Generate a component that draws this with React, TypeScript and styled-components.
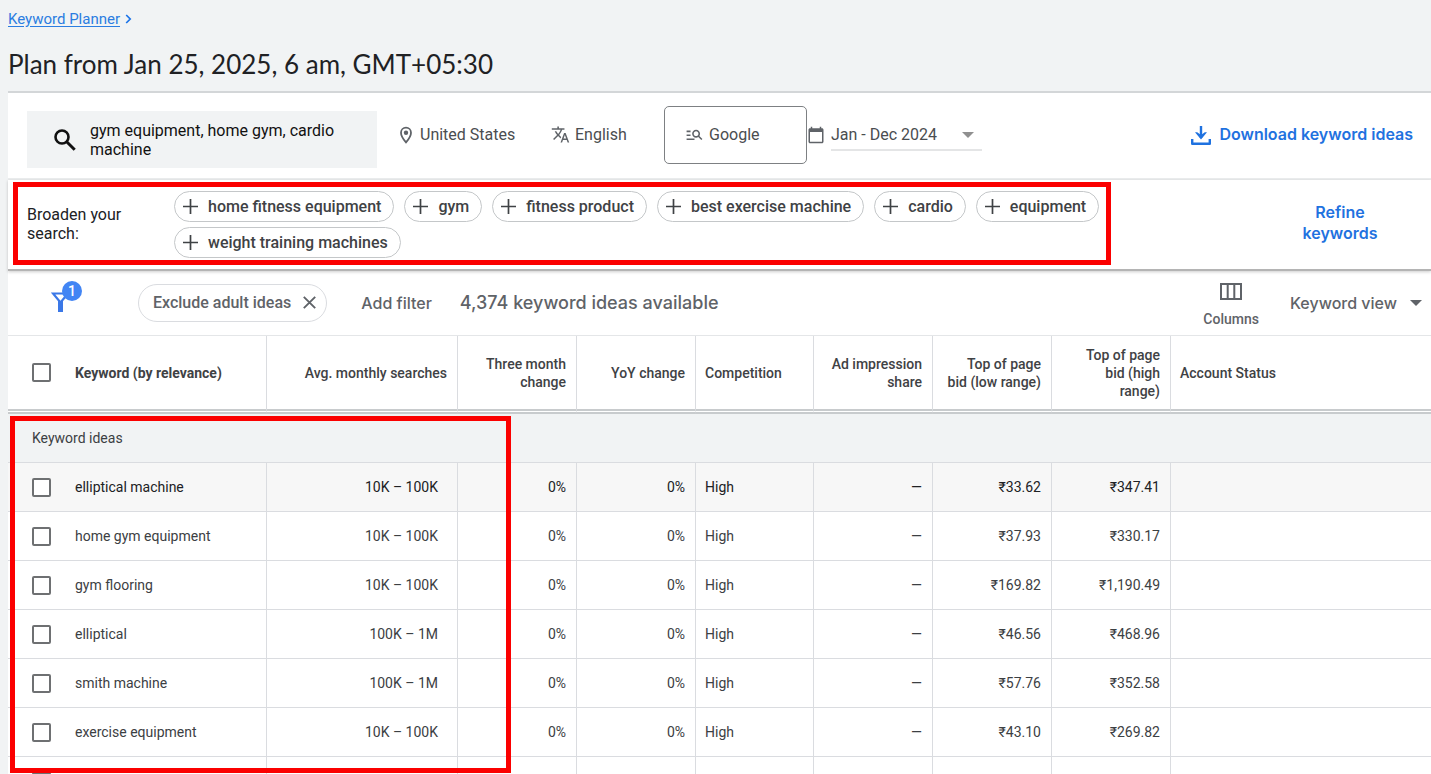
import React from "react";
import styled, { createGlobalStyle, css } from "styled-components";
import { MdTranslate, MdManageSearch, MdCalendarToday } from "react-icons/md";

const GlobalStyle = createGlobalStyle`
  *, *::before, *::after { box-sizing: border-box; }
  body {
    margin: 0;
    background: #f1f3f4;
    font-family: Roboto, "Liberation Sans", sans-serif;
    font-size: 14px;
    color: #3c4043;
  }
  button, select { font: inherit; color: inherit; background: none; border: 0; padding: 0; cursor: pointer; }
`;

const display = `Inter, Roboto, sans-serif`;

const Page = styled.div`
  height: 100vh;
  overflow: hidden;
  padding-left: 8px;
`;

const Breadcrumb = styled.nav`
  display: flex;
  align-items: center;
  gap: 5px;
  height: 38px;
`;

const CrumbLink = styled.a`
  color: #2b7de1;
  font-size: 15px;
  text-decoration: underline;
  text-underline-offset: 2px;
`;

const Title = styled.h1`
  margin: 0;
  height: 53px;
  line-height: 52px;
  font-family: Lato, Roboto, sans-serif;
  font-size: 26px;
  font-weight: 400;
  color: #202124;
  white-space: nowrap;
`;

const Panel = styled.main`
  background: #fff;
  border-top: 2px solid #d3d6d8;
`;

const Settings = styled.section`
  display: flex;
  align-items: center;
  height: 87px;
  padding: 0 18px 2px 19px;
  border-bottom: 2px solid #ebedee;
  font-size: 16px;
`;

const SearchField = styled.button`
  display: flex;
  align-items: center;
  gap: 14px;
  width: 350px;
  height: 57px;
  margin-top: 10px;
  padding-left: 27px;
  background: #f1f3f4;
  color: #111;
  line-height: 19px;
  text-align: left;
  svg { flex: none; }
`;

const Setting = styled.button<{ $width: number; $boxed?: boolean }>`
  display: flex;
  align-items: center;
  gap: 5px;
  width: ${(p) => p.$width}px;
  height: 58px;
  padding-left: 20px;
  color: #4a4d50;
  svg { flex: none; color: #5f6368; }
  ${(p) =>
    p.$boxed &&
    css`
      border: 1px solid #7d8083;
      border-radius: 5px;
    `}
`;

const DateRange = styled.div`
  display: flex;
  align-items: center;
  gap: 6px;
  color: #5f6368;
`;

const SelectWrap = styled.div<{ $underlined?: boolean }>`
  display: flex;
  align-items: center;
  position: relative;
  width: 132px;
  color: #5f6368;
  ${(p) =>
    p.$underlined &&
    css`
      width: 151px;
      height: 33px;
      padding-top: 2px;
      color: #909090;
      border-bottom: 2px solid #e4e5e6;
    `}
  svg {
    position: absolute;
    right: ${(p) => (p.$underlined ? 8 : 0)}px;
    pointer-events: none;
  }
`;

const Select = styled.select<{ $display?: boolean }>`
  appearance: none;
  flex: 1;
  outline: 0;
  padding-right: 21px;
  color: ${(p) => (p.$display ? "#5f6368" : "#4a4d50")};
  font-family: ${(p) => (p.$display ? display : "inherit")};
  font-size: 16px;
  font-weight: ${(p) => (p.$display ? 500 : 400)};
`;

const BlueButton = styled.button<{ $width?: number }>`
  display: flex;
  align-items: center;
  justify-content: center;
  gap: 8px;
  margin-left: auto;
  width: ${(p) => (p.$width ? `${p.$width}px` : "auto")};
  color: #1f72e0;
  font-family: ${display};
  font-size: 16px;
  font-weight: 600;
  line-height: 21px;
  white-space: ${(p) => (p.$width ? "normal" : "nowrap")};
`;

const Broaden = styled.section`
  display: flex;
  align-items: center;
  height: 91px;
  padding: 0 43px 3px 5px;
  border-bottom: 2px solid #b4b4b4;
  box-shadow: 0 1px 3px rgba(0, 0, 0, 0.2);
  position: relative;
`;

const BroadenFrame = styled.div`
  display: flex;
  align-items: center;
  width: 1098px;
  height: 83px;
  padding: 2px 0 0 9px;
  border: 5px solid #fb0000;
`;

const BroadenLabel = styled.div`
  width: 147px;
  padding-right: 30px;
  color: #202124;
  font-size: 16px;
  line-height: 19px;
`;

const Chips = styled.div`
  flex: 1;
  display: flex;
  flex-wrap: wrap;
  gap: 5px 10px;
`;

const Chip = styled.button`
  display: flex;
  align-items: center;
  gap: 10px;
  height: 31px;
  padding: 0 12px 0 8px;
  border: 1px solid #c4c7c9;
  border-radius: 16px;
  color: #3f4245;
  font-size: 16px;
  font-weight: 500;
  white-space: nowrap;
`;

const FilterBar = styled.section`
  display: flex;
  align-items: center;
  height: 65px;
  padding: 0 9px 1px 42px;
  border-bottom: 1px solid #e4e6e8;
  color: #5f6368;
`;

const FilterButton = styled.button`
  position: relative;
  width: 34px;
  height: 32px;
  margin-right: 54px;
  margin-top: -12px;
  svg { position: absolute; left: 1px; bottom: 1px; }
`;

const Badge = styled.span`
  position: absolute;
  top: 0;
  right: 2px;
  width: 20px;
  height: 20px;
  border-radius: 50%;
  background: #4285f4;
  color: #fff;
  font-size: 14px;
  font-weight: 500;
  line-height: 20px;
  text-align: center;
`;

const FilterChip = styled.button`
  display: flex;
  align-items: center;
  gap: 12px;
  height: 38px;
  padding: 0 10px 0 14px;
  border: 1px solid #dadce0;
  border-radius: 19px;
  font-size: 16px;
  font-weight: 500;
  white-space: nowrap;
`;

const AddFilter = styled.button`
  margin: 0 28px 0 34px;
  font-family: ${display};
  font-size: 16px;
  font-weight: 500;
  white-space: nowrap;
`;

const Available = styled.span`
  font-family: ${display};
  font-size: 18px;
  font-weight: 500;
  white-space: nowrap;
`;

const ColumnsButton = styled.button`
  display: flex;
  flex-direction: column;
  align-items: center;
  gap: 11px;
  margin: 4px 31px 0 auto;
  font-size: 14px;
  font-weight: 500;
`;

const Results = styled.div`
  position: relative;
`;

const Table = styled.table`
  width: 100%;
  table-layout: fixed;
  border-collapse: separate;
  border-spacing: 0;
`;

const HeadCell = styled.th<{ $left?: boolean }>`
  height: 78px;
  padding: 0 10px 0 9px;
  border-right: 1px solid #dadce0;
  border-bottom: 5px double #c8cbcd;
  color: #3f4245;
  font-weight: 500;
  line-height: 18px;
  text-align: ${(p) => (p.$left ? "left" : "right")};
  white-space: pre-line;
  &:first-child { font-weight: 700; }
  &:last-child { border-right: 0; }
`;

const GroupCell = styled.th`
  height: 49px;
  padding: 0 24px;
  background: #f1f3f4;
  border-bottom: 1px solid #dadce0;
  font-weight: 400;
  text-align: left;
`;

const Row = styled.tr<{ $active?: boolean }>`
  background: ${(p) => (p.$active ? "#f7f7f7" : "#fff")};
  color: ${(p) => (p.$active ? "#202124" : "#3c4043")};
`;

const Cell = styled.td<{ $left?: boolean; $wide?: boolean }>`
  height: 49px;
  padding: 0 ${(p) => (p.$wide ? 19 : 10)}px 0 9px;
  border-right: 1px solid #dadce0;
  border-bottom: 1px solid #dadce0;
  text-align: ${(p) => (p.$left ? "left" : "right")};
  &:last-child { border-right: 0; }
`;

const CheckLabel = styled.label`
  display: flex;
  align-items: center;
  gap: 24px;
  padding-left: 15px;
`;

const Checkbox = styled.input`
  appearance: none;
  flex: none;
  width: 19px;
  height: 19px;
  margin: 0;
  border: 2px solid #6e7072;
  border-radius: 2px;
  background: #fff;
  &:checked { background: #1a73e8; border-color: #1a73e8; }
`;

const ResultsFrame = styled.div`
  position: absolute;
  top: 80px;
  left: 2px;
  width: 501px;
  height: 357px;
  border: 5px solid #fb0000;
  pointer-events: none;
`;

const Caret = () => (
  <svg width="12" height="6" viewBox="0 0 12 6" aria-hidden="true">
    <path d="M0 0h12L6 6z" fill="currentColor" />
  </svg>
);

const Plus = () => (
  <svg width="15" height="15" viewBox="0 0 15 15" aria-hidden="true">
    <path d="M7.5 0v15M0 7.5h15" stroke="currentColor" strokeWidth="1.7" />
  </svg>
);

const suggestions = [
  "home fitness equipment",
  "gym",
  "fitness product",
  "best exercise machine",
  "cardio",
  "equipment",
  "weight training machines",
];

const rows = [
  ["elliptical machine", "10K – 100K", "33.62", "347.41"],
  ["home gym equipment", "10K – 100K", "37.93", "330.17"],
  ["gym flooring", "10K – 100K", "169.82", "1,190.49"],
  ["elliptical", "100K – 1M", "46.56", "468.96"],
  ["smith machine", "100K – 1M", "57.76", "352.58"],
  ["exercise equipment", "10K – 100K", "43.10", "269.82"],
];

const columnWidths = [259, 191, 119, 119, 118, 119, 119, 119];

export default function App() {
  return (
    <Page>
      <GlobalStyle />
      <Breadcrumb>
        <CrumbLink href="#">Keyword Planner</CrumbLink>
        <svg width="7" height="10" viewBox="0 0 7 10" aria-hidden="true">
          <path d="M1.2 1l4 4-4 4" fill="none" stroke="#1a73e8" strokeWidth="1.7" />
        </svg>
      </Breadcrumb>
      <Title>Plan from Jan 25, 2025, 6 am, GMT+05:30</Title>
      <Panel>
        <Settings>
          <SearchField>
            <svg width="22" height="22" viewBox="0 0 22 22" aria-hidden="true">
              <circle cx="8" cy="8" r="6.500" fill="none" stroke="currentColor" strokeWidth="2.600" />
              <path d="M12.700 12.700l8 8" stroke="currentColor" strokeWidth="3" />
            </svg>
            <span>gym equipment, home gym, cardio machine</span>
          </SearchField>
          <Setting $width={154}>
            <svg width="18" height="18" viewBox="0 0 18 18" aria-hidden="true">
              <path
                d="M9 16.300C6 12.900 4 9.800 4 6.700a5 5 0 0 1 10 0c0 3.100-2 6.200-5 9.600z"
                fill="none"
                stroke="currentColor"
                strokeWidth="1.800"
              />
              <circle cx="9" cy="6.700" r="2.200" fill="currentColor" />
            </svg>
            United States
          </Setting>
          <Setting $width={133}>
            <MdTranslate size={19} />
            English
          </Setting>
          <Setting $width={143} $boxed>
            <MdManageSearch size={19} />
            Google
          </Setting>
          <DateRange>
            <MdCalendarToday size={18} />
            <SelectWrap $underlined>
              <Select aria-label="Date range">
                <option>Jan - Dec 2024</option>
              </Select>
              <Caret />
            </SelectWrap>
          </DateRange>
          <BlueButton>
            <svg width="20" height="20" viewBox="0 0 20 20" aria-hidden="true">
              <path
                d="M10 1v12M1.200 14v4.800h17.600V14"
                fill="none"
                stroke="currentColor"
                strokeWidth="2.400"
                strokeLinejoin="round"
              />
              <path d="M4 7.200h2.200L10 10l3.800-2.800H16L10 14.600z" fill="currentColor" />
            </svg>
            Download keyword ideas
          </BlueButton>
        </Settings>
        <Broaden>
          <BroadenFrame>
            <BroadenLabel>Broaden your search:</BroadenLabel>
            <Chips>
              {suggestions.map((s) => (
                <Chip key={s}>
                  <Plus />
                  {s}
                </Chip>
              ))}
            </Chips>
          </BroadenFrame>
          <BlueButton $width={96}>Refine keywords</BlueButton>
        </Broaden>
        <FilterBar>
          <FilterButton aria-label="Filters">
            <svg width="19" height="20" viewBox="0 0 19 20" aria-hidden="true">
              <path d="M2 1.500h15L9.500 10.500z" fill="none" stroke="#3b78e7" strokeWidth="2.200" />
              <path d="M7 9h5v11H7z" fill="#3b78e7" />
            </svg>
            <Badge>1</Badge>
          </FilterButton>
          <FilterChip>
            Exclude adult ideas
            <svg width="13" height="13" viewBox="0 0 13 13" aria-hidden="true">
              <path d="M.8.8l11.400 11.400M12.200.8L.8 12.200" stroke="currentColor" strokeWidth="1.900" />
            </svg>
          </FilterChip>
          <AddFilter>Add filter</AddFilter>
          <Available>4,374 keyword ideas available</Available>
          <ColumnsButton>
            <svg width="22" height="17" viewBox="0 0 22 17" aria-hidden="true">
              <path d="M1 1h20v15H1zM7.700 1v15M14.300 1v15" fill="none" stroke="currentColor" strokeWidth="2" />
            </svg>
            Columns
          </ColumnsButton>
          <SelectWrap>
            <Select $display aria-label="View">
              <option>Keyword view</option>
            </Select>
            <Caret />
          </SelectWrap>
        </FilterBar>
        <Results>
          <Table>
            <colgroup>
              {columnWidths.map((w, i) => (
                <col key={i} width={w} />
              ))}
              <col />
            </colgroup>
            <thead>
              <tr>
                <HeadCell $left>
                  <CheckLabel>
                    <Checkbox type="checkbox" />
                    Keyword (by relevance)
                  </CheckLabel>
                </HeadCell>
                <HeadCell>Avg. monthly searches</HeadCell>
                <HeadCell>Three month change</HeadCell>
                <HeadCell>YoY change</HeadCell>
                <HeadCell $left>Competition</HeadCell>
                <HeadCell>Ad impression share</HeadCell>
                <HeadCell>{"Top of page\nbid (low range)"}</HeadCell>
                <HeadCell>{"Top of page\nbid (high\nrange)"}</HeadCell>
                <HeadCell $left>Account Status</HeadCell>
              </tr>
            </thead>
            <tbody>
              <tr>
                <GroupCell colSpan={9}>Keyword ideas</GroupCell>
              </tr>
              {rows.map(([keyword, searches, low, high], i) => (
                <Row key={keyword} $active={i === 0}>
                  <Cell $left>
                    <CheckLabel>
                      <Checkbox type="checkbox" />
                      {keyword}
                    </CheckLabel>
                  </Cell>
                  <Cell $wide>{searches}</Cell>
                  <Cell>0%</Cell>
                  <Cell>0%</Cell>
                  <Cell $left>High</Cell>
                  <Cell>—</Cell>
                  <Cell>₹{low}</Cell>
                  <Cell>₹{high}</Cell>
                  <Cell />
                </Row>
              ))}
              <Row>
                <Cell $left>
                  <CheckLabel>
                    <Checkbox type="checkbox" />
                  </CheckLabel>
                </Cell>
                {columnWidths.map((w, i) => (
                  <Cell key={i} />
                ))}
              </Row>
            </tbody>
          </Table>
          <ResultsFrame />
        </Results>
      </Panel>
    </Page>
  );
}
